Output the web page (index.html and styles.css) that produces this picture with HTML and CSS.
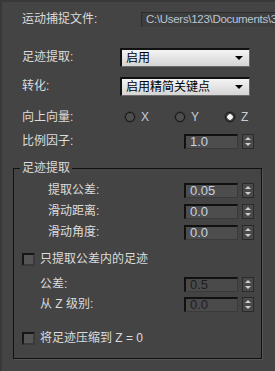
FILE: index.html
```html
<!DOCTYPE html>
<html lang="zh">
<head>
    <meta charset="UTF-8">
    <title>运动捕捉</title>
    <link rel="stylesheet" href="styles.css">
</head>
<body>
    <div class="panel">
        <div class="row file-row">
            <span class="label">运动捕捉文件:</span>
            <div class="path">C:\Users\123\Documents\3</div>
        </div>

        <div class="row select-row first">
            <span class="label">足迹提取:</span>
            <div class="select"><span>启用</span><i class="caret"></i></div>
        </div>
        <div class="row select-row">
            <span class="label">转化:</span>
            <div class="select"><span>启用精简关键点</span><i class="caret"></i></div>
        </div>

        <div class="row radio-row">
            <span class="label">向上向量:</span>
            <div class="radios">
                <label class="radio"><i class="dot"></i>X</label>
                <label class="radio"><i class="dot"></i>Y</label>
                <label class="radio"><i class="dot on"></i>Z</label>
            </div>
        </div>

        <div class="row spin-row top">
            <span class="label">比例因子:</span>
            <div class="field">1.0</div>
            <div class="spin"></div>
        </div>

        <fieldset class="group">
            <legend>足迹提取</legend>
            <div class="row spin-row inner">
                <span class="label">提取公差:</span>
                <div class="field">0.05</div>
                <div class="spin"></div>
            </div>
            <div class="row spin-row inner">
                <span class="label">滑动距离:</span>
                <div class="field">0.0</div>
                <div class="spin"></div>
            </div>
            <div class="row spin-row inner">
                <span class="label">滑动角度:</span>
                <div class="field">0.0</div>
                <div class="spin"></div>
            </div>

            <div class="row check-row">
                <i class="box"></i>
                <span class="label">只提取公差内的足迹</span>
            </div>

            <div class="row spin-row sub first-sub">
                <span class="label">公差:</span>
                <div class="field off">0.5</div>
                <div class="spin"></div>
            </div>
            <div class="row spin-row sub">
                <span class="label">从 Z 级别:</span>
                <div class="field off">0.0</div>
                <div class="spin"></div>
            </div>

            <div class="row check-row last">
                <i class="box"></i>
                <span class="label">将足迹压缩到 Z = 0</span>
            </div>
        </fieldset>
    </div>
</body>
</html>
```

FILE: styles.css
```css
:root {
    --bg: #444444;
    --text: #dcdcdc;
    --field-bg: #4d4d4d;
    --field-text: #c8d2e0;
}

* {
    margin: 0;
    padding: 0;
    box-sizing: border-box;
}

body {
    width: 275px;
    height: 371px;
    overflow: hidden;
    background: var(--bg);
    color: var(--text);
    font-family: "Liberation Sans", "Noto Sans CJK SC", sans-serif;
    font-size: 12px;
    line-height: 15px;
}

.panel {
    height: 371px;
    padding-top: 12px;
    box-shadow: inset 2px 2px 0 #383838;
}

.row {
    display: flex;
    align-items: center;
}

.label {
    white-space: nowrap;
}

/* file path */
.file-row {
    height: 15px;
    padding-left: 22px;
}

.file-row .label {
    flex: 0 0 119px;
}

.path {
    flex: 1;
    min-width: 0;
    height: 15px;
    padding-left: 4px;
    overflow: hidden;
    background: #3e3e3e;
    border-top: 1px solid #2c2c2c;
    border-left: 1px solid #2c2c2c;
    color: #b9c6d4;
    font-size: 11.5px;
    letter-spacing: -0.3px;
    white-space: nowrap;
    line-height: 13px;
}

/* dropdowns */
.select-row {
    height: 19px;
    margin-top: 10px;
    padding-left: 22px;
}

.select-row.first {
    margin-top: 21px;
}

.select-row .label {
    flex: 0 0 98px;
}

.select {
    position: relative;
    width: 130px;
    height: 19px;
    padding: 1px 0 0 4px;
    background: linear-gradient(#f4f4f4, #d4d4d4);
    border-top: 2px solid #111;
    border-left: 2px solid #111;
    border-bottom: 1px solid #6a6a6a;
    border-right: 1px solid #6a6a6a;
    color: #000;
    line-height: 15px;
}

.caret {
    position: absolute;
    right: 6px;
    top: 6px;
    border-left: 4px solid transparent;
    border-right: 4px solid transparent;
    border-top: 4px solid #000;
}

/* radio buttons */
.radio-row {
    height: 14px;
    margin-top: 14px;
    padding-left: 22px;
}

.radio-row .label {
    flex: 0 0 103px;
}

.radios {
    display: flex;
}

.radio {
    display: flex;
    align-items: center;
    gap: 6px;
    width: 50px;
    color: #c4ccd8;
}

.dot {
    width: 10px;
    height: 10px;
    border-radius: 50%;
    border: 1px solid #151515;
    background: #4e4e4e;
    box-shadow: 0 0 0 1px #3a3a3a;
}

.dot.on {
    background: radial-gradient(circle, #f2f2f2 0 2.5px, #4e4e4e 3px);
}

/* spinners */
.spin-row {
    height: 15px;
}

.spin-row .label {
    flex: 1;
}

.spin-row.top {
    margin-top: 10px;
    padding: 0 21px 0 22px;
}

.field {
    width: 54px;
    height: 15px;
    padding-left: 4px;
    background: var(--field-bg);
    border-top: 2px solid #111;
    border-left: 2px solid #111;
    border-bottom: 1px solid #3a3a3a;
    border-right: 1px solid #3a3a3a;
    color: var(--field-text);
    font-size: 13px;
    line-height: 12px;
}

.field.off {
    color: #1e1e1e;
    background: #4a4a4a;
}

.spin {
    position: relative;
    width: 12px;
    height: 15px;
    margin-left: 4px;
    background: #4a4a4a;
    border: 1px solid #2a2a2a;
}

.spin::before,
.spin::after {
    content: "";
    position: absolute;
    left: 2px;
    border-left: 3px solid transparent;
    border-right: 3px solid transparent;
}

.spin::before {
    top: 2px;
    border-bottom: 3px solid #d0d0d0;
}

.spin::after {
    bottom: 2px;
    border-top: 3px solid #d0d0d0;
    box-shadow: 0 -3px 0 -2px #d0d0d0;
}

/* group box */
.group {
    margin: 11px 13px 0;
    padding: 7px 7px 13px 0;
    border: 1px solid #111;
    box-shadow: 1px 1px 0 #555;
}

.group legend {
    margin-left: 6px;
    padding: 0 2px;
    line-height: 16px;
}

.spin-row.inner {
    padding-left: 34px;
    margin-bottom: 6px;
}

.spin-row.sub {
    padding-left: 26px;
    margin-top: 5px;
}

.spin-row.first-sub {
    margin-top: 11px;
}

.check-row {
    height: 14px;
    margin-top: 12px;
    padding-left: 8px;
    gap: 5px;
}

.check-row.last {
    margin-top: 19px;
}

.box {
    width: 13px;
    height: 13px;
    background: #555;
    border: 2px solid #161616;
    border-right-color: #3a3a3a;
    border-bottom-color: #3a3a3a;
}
```
